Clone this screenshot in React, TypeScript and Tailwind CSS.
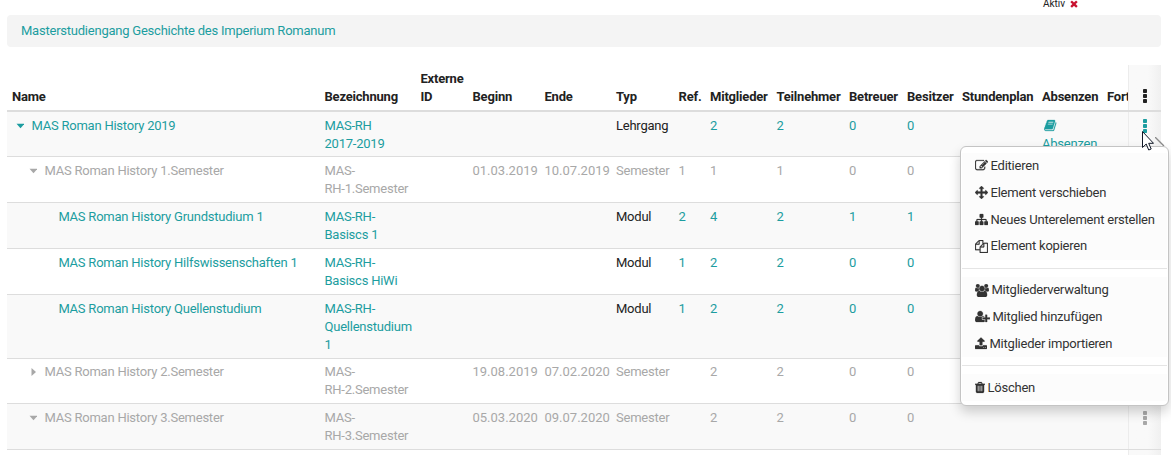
import type { ReactNode } from "react";

const ICONS = {
  edit: { box: "0 0 1792 1792", d: "M888 1184l116-116-152-152-116 116v56h96v96h56zm440-720q-16-16-33 1l-350 350q-17 17-1 33t33-1l350-350q17-17 1-33zm80 594v190q0 119-84.5 203.5t-203.5 84.5h-832q-119 0-203.500-84.500t-84.500-203.500v-832q0-119 84.500-203.500t203.500-84.500h832q63 0 117 25 15 7 18 23 3 17-9 29l-49 49q-14 14-32 8-23-6-45-6h-832q-66 0-113 47t-47 113v832q0 66 47 113t113 47h832q66 0 113-47t47-113v-126q0-13 9-22l64-64q15-15 35-7t20 29zm-96-738l288 288-672 672h-288v-288zm444 132l-92 92-288-288 92-92q28-28 68-28t68 28l152 152q28 28 28 68t-28 68z" },
  move: { box: "0 0 1792 1792", d: "M1792 896q0 26-19 45l-256 256q-19 19-45 19t-45-19-19-45v-128h-384v384h128q26 0 45 19t19 45-19 45l-256 256q-19 19-45 19t-45-19l-256-256q-19-19-19-45t19-45 45-19h128v-384h-384v128q0 26-19 45t-45 19-45-19l-256-256q-19-19-19-45t19-45l256-256q19-19 45-19t45 19 19 45v128h384v-384h-128q-26 0-45-19t-19-45 19-45l256-256q19-19 45-19t45 19l256 256q19 19 19 45t-19 45-45 19h-128v384h384v-128q0-26 19-45t45-19 45 19l256 256q19 19 19 45z" },
  tree: { box: "0 0 1792 1792", d: "M1792 1248v320q0 40-28 68t-68 28h-320q-40 0-68-28t-28-68v-320q0-40 28-68t68-28h96v-192h-512v192h96q40 0 68 28t28 68v320q0 40-28 68t-68 28h-320q-40 0-68-28t-28-68v-320q0-40 28-68t68-28h96v-192h-512v192h96q40 0 68 28t28 68v320q0 40-28 68t-68 28h-320q-40 0-68-28t-28-68v-320q0-40 28-68t68-28h96v-192q0-52 38-90t90-38h512v-192h-96q-40 0-68-28t-28-68v-320q0-40 28-68t68-28h320q40 0 68 28t28 68v320q0 40-28 68t-68 28h-96v192h512q52 0 90 38t38 90v192h96q40 0 68 28t28 68z" },
  copy: { box: "0 0 1792 1792", d: "M1696 384q40 0 68 28t28 68v1216q0 40-28 68t-68 28h-960q-40 0-68-28t-28-68v-288h-544q-40 0-68-28t-28-68v-672q0-40 20-88t48-76l408-408q28-28 76-48t88-20h416q40 0 68 28t28 68v328q68-40 128-40h416zm-544 213l-299 299h299v-299zm-640-384l-299 299h299v-299zm196 647l316-316v-416h-384v416q0 40-28 68t-68 28h-416v640h512v-256q0-40 20-88t48-76zm956 804v-1152h-384v416q0 40-28 68t-68 28h-416v640h896z" },
  users: { box: "0 0 1920 1792", d: "M593 896q-162 5-265 128h-134q-82 0-138-40.5t-56-118.500q0-353 124-353 6 0 43.500 21t97.500 42.500 119 21.500q67 0 133-23-5 37-5 66 0 139 81 256zm1071 637q0 120-73 189.500t-194 69.500h-874q-121 0-194-69.500t-73-189.500q0-53 3.500-103.500t14-109 26.500-108.500 43-97.500 62-81 85.500-53.500 111.500-20q10 0 43 21.500t73 48 107 48 135 21.500 135-21.500 107-48 73-48 43-21.500q61 0 111.500 20t85.500 53.500 62 81 43 97.500 26.500 108.500 14 109 3.500 103.500zm-1024-1277q0 106-75 181t-181 75-181-75-75-181 75-181 181-75 181 75 75 181zm704 384q0 159-112.500 271.500t-271.500 112.500-271.500-112.500-112.500-271.500 112.500-271.500 271.500-112.500 271.500 112.500 112.500 271.500zm576 225q0 78-56 118.500t-138 40.500h-134q-103-123-265-128 81-117 81-256 0-29-5-66 66 23 133 23 59 0 119-21.500t97.500-42.500 43.500-21q124 0 124 353zm-128-609q0 106-75 181t-181 75-181-75-75-181 75-181 181-75 181 75 75 181z" },
  addUser: { box: "0 0 2048 1792", d: "M704 896q-159 0-271.500-112.500t-112.500-271.500 112.500-271.500 271.500-112.500 271.500 112.500 112.500 271.500-112.500 271.500-271.500 112.500zm960 128h352q13 0 22.500 9.500t9.500 22.500v192q0 13-9.500 22.500t-22.500 9.500h-352v352q0 13-9.500 22.500t-22.500 9.500h-192q-13 0-22.500-9.500t-9.500-22.500v-352h-352q-13 0-22.500-9.500t-9.500-22.500v-192q0-13 9.500-22.500t22.500-9.500h352v-352q0-13 9.500-22.500t22.500-9.500h192q13 0 22.500 9.500t9.500 22.500v352zm-736 224q0 52 38 90t90 38h256v238q-68 50-171 50h-874q-121 0-194-69t-73-190q0-53 3.500-103.500t14-109 26.500-108.500 43-97.500 62-81 85.500-53.500 111.500-20q19 0 39 17 79 61 154.500 91.500t164.500 30.500 164.500-30.500 154.500-91.500q20-17 39-17 132 0 217 96h-223q-52 0-90 38t-38 90v192z" },
  upload: { box: "64 0 1664 1792", d: "M1344 1472q0-26-19-45t-45-19-45 19-19 45 19 45 45 19 45-19 19-45zm256 0q0-26-19-45t-45-19-45 19-19 45 19 45 45 19 45-19 19-45zm128-224v320q0 40-28 68t-68 28h-1472q-40 0-68-28t-28-68v-320q0-40 28-68t68-28h427q21 56 70.500 92t110.500 36h256q61 0 110.500-36t70.500-92h427q40 0 68 28t28 68zm-325-648q-17 40-59 40h-256v448q0 26-19 45t-45 19h-256q-26 0-45-19t-19-45v-448h-256q-42 0-59-40-17-39 14-69l448-448q18-19 45-19t45 19l448 448q31 30 14 69z" },
  trash: { box: "192 0 1408 1792", d: "M704 1376v-704q0-14-9-23t-23-9h-64q-14 0-23 9t-9 23v704q0 14 9 23t23 9h64q14 0 23-9t9-23zm256 0v-704q0-14-9-23t-23-9h-64q-14 0-23 9t-9 23v704q0 14 9 23t23 9h64q14 0 23-9t9-23zm256 0v-704q0-14-9-23t-23-9h-64q-14 0-23 9t-9 23v704q0 14 9 23t23 9h64q14 0 23-9t9-23zm-544-992h448l-48-117q-7-9-17-11h-317q-10 2-17 11zm928 32v64q0 14-9 23t-23 9h-96v948q0 83-47 143.500t-113 60.500h-832q-66 0-113-58.500t-47-141.500v-952h-96q-14 0-23-9t-9-23v-64q0-14 9-23t23-9h309l70-167q15-37 54-63t79-26h320q40 0 79 26t54 63l70 167h309q14 0 23 9t9 23z" },
  book: { box: "64 0 1664 1792", d: "M1703 478q40 57 18 129l-275 906q-19 64-76.500 107.500t-122.500 43.500h-923q-77 0-148.500-53.500t-99.500-131.500q-24-67-2-127 0-4 3-27t4-37q1-8-3-21.500t-3-19.500q2-11 8-21t16.500-23.500 16.500-23.500q23-38 45-91.500t30-91.500q3-10 .5-30t-.5-28q3-11 17-28t17-23q21-36 42-92t25-90q1-9-2.500-32t.5-28q4-13 22-30.500t22-22.500q19-26 42.500-84.500t27.500-96.500q1-8-3-25.500t-2-26.500q2-8 9-18t18-23 17-21q8-12 16.500-30.500t15-35 16-36 19.500-32 26.500-23.500 36-11.500 47.500 5.500l-1 3q38-9 51-9h761q74 0 114 56t18 130l-274 906q-36 119-71.500 153.500t-128.500 34.500h-869q-27 0-38 15-11 16-1 43 24 70 144 70h923q29 0 56-15.500t35-41.500l300-987q7-22 5-57 38 15 59 43zm-1064 2q-4 13 2 22.500t20 9.500h608q13 0 25.500-9.500t16.500-22.500l21-64q4-13-2-22.500t-20-9.500h-608q-13 0-25.500 9.500t-16.500 22.500zm-83 256q-4 13 2 22.500t20 9.500h608q13 0 25.500-9.500t16.500-22.500l21-64q4-13-2-22.500t-20-9.500h-608q-13 0-25.500 9.500t-16.500 22.500z" },
  times: { box: "302 238 1188 1316", d: "M1490 1322q0 40-28 68l-136 136q-28 28-68 28t-68-28l-294-294-294 294q-28 28-68 28t-68-28l-136-136q-28-28-28-68t28-68l294-294-294-294q-28-28-28-68t28-68l136-136q28-28 68-28t68 28l294 294 294-294q28-28 68-28t68 28l136 136q28 28 28 68t-28 68l-294 294 294 294q28 28 28 68z" },
};

type IconName = keyof typeof ICONS;

function Icon({ name, className }: { name: IconName; className: string }) {
  return (
    <svg viewBox={ICONS[name].box} className={`shrink-0 ${className}`} fill="currentColor" stroke="currentColor" strokeWidth="30" aria-hidden="true">
      <path d={ICONS[name].d} />
    </svg>
  );
}

function Dots() {
  return (
    <svg viewBox="0 0 4 14" className="h-3.5 w-1" fill="currentColor" aria-hidden="true">
      <rect x="0" y="0" width="4" height="4" rx="0.8" />
      <rect x="0" y="5" width="4" height="4" rx="0.8" />
      <rect x="0" y="10" width="4" height="4" rx="0.8" />
    </svg>
  );
}

const COLS =
  "grid grid-cols-[312.5px_96px_52px_72px_71.5px_62.5px_31.5px_66.5px_72.500px_58px_55px_80px_65px_60px]";

type Row = {
  height: string;
  indent: string;
  pad?: string;
  caret?: "down" | "right";
  muted?: boolean;
  name: string;
  label: string[];
  begin?: string;
  end?: string;
  type: string;
  ref?: string;
  counts: string[];
  absences?: boolean;
};

const ROWS: Row[] = [
  { height: "h-[45px]", indent: "pl-[9px]", caret: "down", name: "MAS Roman History 2019", label: ["MAS-RH", "2017-2019"], type: "Lehrgang", counts: ["2", "2", "0", "0"], absences: true },
  { height: "h-[46px]", indent: "pl-[22px]", caret: "down", muted: true, name: "MAS Roman History 1.Semester", label: ["MAS-", "RH-1.Semester"], begin: "01.03.2019", end: "10.07.2019", type: "Semester", ref: "1", counts: ["1", "1", "0", "0"] },
  { height: "h-[46px]", indent: "pl-[51.4px]", name: "MAS Roman History Grundstudium 1", label: ["MAS-RH-", "Basiscs 1"], type: "Modul", ref: "2", counts: ["4", "2", "1", "1"] },
  { height: "h-[46px]", indent: "pl-[51.4px]", name: "MAS Roman History Hilfswissenschaften 1", label: ["MAS-RH-", "Basiscs HiWi"], type: "Modul", ref: "1", counts: ["2", "2", "0", "0"] },
  { height: "h-[64px]", indent: "pl-[51.4px]", name: "MAS Roman History Quellenstudium", label: ["MAS-RH-", "Quellenstudium", "1"], type: "Modul", ref: "1", counts: ["2", "2", "0", "0"] },
  { height: "h-[45px]", indent: "pl-[22px]", pad: "pt-[4px]", caret: "right", muted: true, name: "MAS Roman History 2.Semester", label: ["MAS-", "RH-2.Semester"], begin: "19.08.2019", end: "07.02.2020", type: "Semester", counts: ["2", "2", "0", "0"] },
  { height: "h-[46px]", indent: "pl-[22px]", caret: "down", muted: true, name: "MAS Roman History 3.Semester", label: ["MAS-", "RH-3.Semester"], begin: "05.03.2020", end: "09.07.2020", type: "Semester", counts: ["2", "2", "0", "0"] },
];

const HEADINGS = ["Name", "Bezeichnung", "Externe ID", "Beginn", "Ende", "Typ", "Ref.", "Mitglieder", "Teilnehmer", "Betreuer", "Besitzer", "Stundenplan", "Absenzen", "Fort"];

function Cell({ children }: { children?: ReactNode }) {
  return <div className="min-w-0 pl-[5px] whitespace-nowrap">{children}</div>;
}

function Caret({ dir }: { dir: "down" | "right" }) {
  return (
    <svg viewBox="0 0 8 8" className="mt-[5px] mr-[7.500px] size-2 shrink-0" fill="currentColor" aria-hidden="true">
      <path d={dir === "down" ? "M.5 1.800h8L4.500 6.300z" : "M2.500 0v8L7 4z"} />
    </svg>
  );
}

function ActionCell({ children, head }: { children?: ReactNode; head?: boolean }) {
  return (
    <div
      className={`flex w-[33px] shrink-0 justify-center border-l border-[#ececec] bg-linear-to-r from-[#f9f9f9] from-60% to-[#f0f0f0] ${head ? "items-end pb-[7px] text-[#222]" : "pt-[7px]"}`}
    >
      {children}
    </div>
  );
}

function TableRow({ row, odd }: { row: Row; odd: boolean }) {
  const tone = row.muted ? "text-[#a8a8a8]" : "text-[#1c9da0]";
  return (
    <div className={`flex border-b border-[#ddd] ${row.height} ${odd ? "bg-[#f9f9f9]" : "bg-white"} ${tone}`}>
      <div className="min-w-0 flex-1 overflow-hidden">
        <div className={`${COLS} ${row.pad ?? "pt-[5px]"}`}>
          <div className={`flex whitespace-nowrap ${row.indent}`}>
            {row.caret && <Caret dir={row.caret} />}
            <span>{row.name}</span>
          </div>
          <Cell>
            {row.label.map((line) => (
              <div key={line}>{line}</div>
            ))}
          </Cell>
          <Cell />
          <Cell>
            <span className="tracking-normal">{row.begin}</span>
          </Cell>
          <Cell>
            <span className="tracking-normal">{row.end}</span>
          </Cell>
          <Cell>
            <span className={row.muted ? "" : "text-[#222]"}>{row.type}</span>
          </Cell>
          <Cell>{row.ref}</Cell>
          {row.counts.map((n, i) => (
            <Cell key={i}>{n}</Cell>
          ))}
          <Cell />
          <Cell>
            {row.absences && (
              <>
                <Icon name="book" className="mt-[2px] ml-[2px] block h-[13px] w-[12.5px]" />
                <div className="mt-[3px]">Absenzen</div>
              </>
            )}
          </Cell>
        </div>
      </div>
      <ActionCell>
        <Dots />
      </ActionCell>
    </div>
  );
}

const MENU: { icon: IconName; size: string; label: string }[][] = [
  [
    { icon: "edit", size: "w-[13px]", label: "Editieren" },
    { icon: "move", size: "w-[13px]", label: "Element verschieben" },
    { icon: "tree", size: "w-[13px]", label: "Neues Unterelement erstellen" },
    { icon: "copy", size: "w-[13px]", label: "Element kopieren" },
  ],
  [
    { icon: "users", size: "w-[14px]", label: "Mitgliederverwaltung" },
    { icon: "addUser", size: "w-[15px]", label: "Mitglied hinzufügen" },
    { icon: "upload", size: "w-[12px]", label: "Mitglieder importieren" },
  ],
  [{ icon: "trash", size: "w-[10px]", label: "Löschen" }],
];

function Menu() {
  return (
    <div className="absolute top-[146px] left-[960px] w-[209px] rounded-md border border-[#c4c4c4] bg-white px-px pt-[5.6px] pb-[4px] text-[#333] shadow-[0_6px_12px_rgba(0,0,0,0.18)]">
      {MENU.map((group, i) => (
        <div key={i}>
          {i > 0 && <div className="my-[8px] h-px bg-[#e5e5e5]" />}
          <div className="bg-[#fcfcfc]">
            {group.map((item) => (
              <div key={item.label} className="flex h-[26.8px] items-center gap-[3px] pl-[12.5px] whitespace-nowrap">
                <Icon name={item.icon} className={`h-[13px] ${item.size}`} />
                <span>{item.label}</span>
              </div>
            ))}
          </div>
        </div>
      ))}
    </div>
  );
}

export default function App() {
  return (
    <div className="relative h-[455px] w-[1171px] overflow-hidden bg-white font-['Roboto',sans-serif] text-[13px] leading-[18px] tracking-[-0.23px]">
      <div className="flex h-[15px] items-start pl-[1043px] text-[10px] leading-[8px] tracking-normal text-[#222]">
        <span>Aktiv</span>
        <Icon name="times" className="ml-[4.500px] h-[7.5px] w-2 text-[#c8102e]" />
      </div>
      <div className="mr-[10px] ml-[7px] h-8 rounded-sm bg-[#f4f4f4] px-[14px] pt-[7px] text-[#1c9da0]">
        Masterstudiengang Geschichte des Imperium Romanum
      </div>
      <div className="mt-[18px] mr-[10px] ml-[7px]">
        <div className="flex h-[47px] border-b-2 border-[#ddd] font-bold tracking-[-0.2px] text-[#222]">
          <div className="min-w-0 flex-1 overflow-hidden">
            <div className={`${COLS} h-[45px] items-end pb-[4px]`}>
              {HEADINGS.map((h) => (
                <div key={h} className={h === "Externe ID" ? "pl-[5px]" : "pl-[5px] whitespace-nowrap"}>
                  {h}
                </div>
              ))}
            </div>
          </div>
          <ActionCell head>
            <Dots />
          </ActionCell>
        </div>
        {ROWS.map((row, i) => (
          <TableRow key={row.name} row={row} odd={i % 2 === 0} />
        ))}
        <div className="flex h-5 justify-end">
          <ActionCell />
        </div>
      </div>
      <svg viewBox="0 0 10 10" className="absolute top-[137px] left-[1155px] size-2.5" fill="none" aria-hidden="true">
        <path d="M0 0l9 9" stroke="#8a8a8a" strokeWidth="1.3" />
      </svg>
      <Menu />
      <svg viewBox="0 0 12 20" className="absolute top-[131px] left-[1142px] h-5 w-3" aria-hidden="true">
        <path d="M.5.5v16l3.700-3.500 2.500 6 2.500-1-2.500-5.700h4.800z" fill="#fff" stroke="#111827" />
      </svg>
    </div>
  );
}
